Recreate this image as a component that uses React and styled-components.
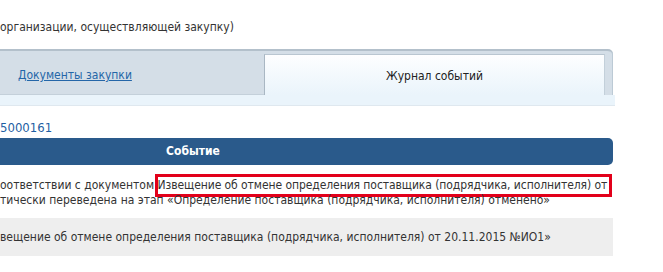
import React from 'react';
import styled, { createGlobalStyle } from 'styled-components';

const GlobalStyle = createGlobalStyle`
  html, body {
    margin: 0;
    padding: 0;
    background: #fff;
    overflow: hidden;
  }
  body {
    font-family: 'DejaVu Sans Condensed', 'DejaVu Sans', Verdana, sans-serif;
    font-size: 12px;
    color: #333;
  }
`;

const Page = styled.div`
  width: 615px;
  padding-top: 19px;
`;

const Intro = styled.div`
  line-height: 16px;
  height: 16px;
  margin-bottom: 14px;
`;

const Tabs = styled.div`
  display: flex;
  flex-direction: column;
`;

const TabRow = styled.div`
  display: flex;
  align-items: flex-end;
  width: 613px;
  height: 46px;
  padding: 3px 8px 0 0;
  box-sizing: border-box;
  background: #d4dee7;
  border-top: 2px solid #b3c0cb;
  border-top-right-radius: 5px;
  box-shadow: inset -1px 0 0 #bccad5;
`;

const Tab = styled.div`
  display: flex;
  align-items: center;
  height: 100%;
  box-sizing: border-box;
  ${(p) =>
    p.$active
      ? `
    flex: 1;
    justify-content: center;
    background: linear-gradient(#fdfeff, #eaf4fb);
    border-top: 1px solid #b9c6d1;
    border-left: 1px solid #a9b7c3;
    border-right: 1px solid #c3d0da;
    color: #222;
    padding-top: 1px;
  `
      : `
    width: 264px;
    padding-left: 18px;
    padding-top: 2px;
    border-bottom: 1px solid #c4d0da;
  `}
`;

const TabLink = styled.a`
  color: #2466a8;
  text-decoration: underline;
  cursor: pointer;
`;

const Strip = styled.div`
  width: 615px;
  height: 10px;
  background: #eaf4fb;
  border-bottom: 1px solid #dfe8ef;
`;

const Number = styled.a`
  display: block;
  margin-top: 14px;
  font-size: 13px;
  line-height: 16px;
  color: #1f5fa3;
  text-decoration: none;
`;

const Table = styled.div`
  width: 613px;
  margin-top: 2px;
`;

const Head = styled.div`
  height: 27px;
  line-height: 27px;
  box-sizing: border-box;
  padding-right: ${(p) => p.$offset}px;
  text-align: center;
  background: #2a5a8b;
  color: #fff;
  font-weight: bold;
  border-radius: 0 5px 5px 0;
`;

const Row = styled.div`
  box-sizing: border-box;
  padding: ${(p) => (p.$shaded ? '12px 0 11px' : '13px 0 10px')};
  background: ${(p) => (p.$shaded ? '#eeeeee' : 'transparent')};
  line-height: 15px;
  white-space: nowrap;
`;

const Line = styled.div`
  height: 15px;
`;

// red annotation frame drawn over the highlighted document name
const Mark = styled.span`
  border: 3px solid #e2001a;
  padding: 1px 2px 2px 0;
  margin-left: -3px;
  letter-spacing: -0.07px;
`;

export default function App() {
  return (
    <Page>
      <GlobalStyle />
      <Intro>организации, осуществляющей закупку)</Intro>
      <Tabs>
        <TabRow>
          <Tab>
            <TabLink>Документы закупки</TabLink>
          </Tab>
          <Tab $active>Журнал событий</Tab>
        </TabRow>
        <Strip />
      </Tabs>
      <Number>5000161</Number>
      <Table>
        <Head $offset={227}>Событие</Head>
        <Row>
          <Line>
            оответствии с документом{' '}
            <Mark>Извещение об отмене определения поставщика (подрядчика, исполнителя) от</Mark>
          </Line>
          <Line>
            тически переведена на этап «Определение поставщика (подрядчика, исполнителя) отменено»
          </Line>
        </Row>
        <Row $shaded>
          вещение об отмене определения поставщика (подрядчика, исполнителя) от 20.11.2015 №ИО1»
        </Row>
      </Table>
    </Page>
  );
}
